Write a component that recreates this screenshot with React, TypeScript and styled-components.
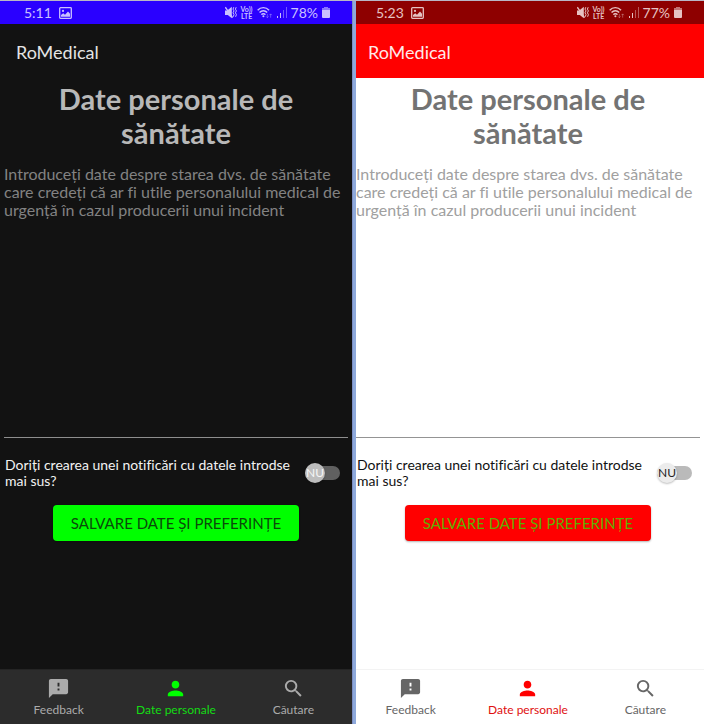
import React, { useId, useState } from "react";
import styled, { createGlobalStyle, ThemeProvider } from "styled-components";
import { MdFeedback, MdPerson, MdSearch } from "react-icons/md";

const GlobalStyle = createGlobalStyle`
  *, *::before, *::after { box-sizing: border-box; }
  body {
    margin: 0;
    background: #ffffff;
    font-family: Lato, "Noto Sans", sans-serif;
    font-variant-ligatures: none;
  }
  button, textarea {
    font-family: inherit;
    font-variant-ligatures: none;
  }
`;

const dark = {
  status: "#2a00ff",
  statusText: "#c9c0ff",
  appBar: "#121212",
  appTitle: "#e4e4e4",
  surface: "#121212",
  heading: "#b8b8b8",
  hint: "#828282",
  line: "#8e8e8e",
  text: "#f2f2f2",
  track: "#606060",
  thumb: "#bdbdbd",
  thumbText: "#f6f6f6",
  button: "#00ff00",
  buttonText: "#0b4a0b",
  nav: "#2c2c2c",
  navEdge: "#242424",
  navItem: "#ababab",
  active: "#00ff00",
  activeText: "#14dc14",
};

const light: typeof dark = {
  status: "#8e0000",
  statusText: "#e6c2c2",
  appBar: "#ff0000",
  appTitle: "#ffe9e9",
  surface: "#ffffff",
  heading: "#737373",
  hint: "#a0a0a0",
  line: "#949494",
  text: "#111111",
  track: "#bababa",
  thumb: "#ececec",
  thumbText: "#222222",
  button: "#ff0000",
  buttonText: "#5fae00",
  nav: "#ffffff",
  navEdge: "#f3f3f3",
  navItem: "#666666",
  active: "#ff0000",
  activeText: "#e01010",
};

type Palette = { theme: typeof dark };

const Page = styled.main`
  display: grid;
  grid-template-columns: 1fr 1fr;
  min-height: 100vh;
  padding-bottom: 2px;
`;

const Screen = styled.section<Palette & { $divided?: boolean }>`
  position: relative;
  display: flex;
  flex-direction: column;
  min-width: 0;
  border-top: 1px solid #b9b6c6;
  background: ${(p) => p.theme.surface};

  &::before {
    content: "";
    display: ${(p) => (p.$divided ? "block" : "none")};
    position: absolute;
    top: 0;
    bottom: 0;
    left: 0;
    width: 4px;
    background: #8ea9db;
    border-left: 1px solid #7d8fc4;
  }
`;

const StatusBar = styled.div<Palette>`
  display: flex;
  align-items: center;
  justify-content: space-between;
  height: 23px;
  padding: 0 22px 0 24px;
  background: ${(p) => p.theme.status};
  color: ${(p) => p.theme.statusText};
  font-size: 14px;
  line-height: 16px;
`;

const StatusGroup = styled.div<{ $gap: number }>`
  display: flex;
  align-items: center;
  gap: ${(p) => p.$gap}px;
`;

const Network = styled.span`
  font-size: 7px;
  font-weight: 700;
  line-height: 7px;
  text-align: center;
`;

const AppBar = styled.header<Palette>`
  display: flex;
  align-items: center;
  height: 54px;
  padding: 2px 16px 0;
  background: ${(p) => p.theme.appBar};
  color: ${(p) => p.theme.appTitle};
  font-size: 18px;
  line-height: 24px;
`;

const Form = styled.form`
  display: flex;
  flex-direction: column;
  flex: 1;
  padding: 4px 4px 0;
`;

const Heading = styled.h1<Palette>`
  align-self: center;
  max-width: 260px;
  margin: 0 0 15px;
  color: ${(p) => p.theme.heading};
  font-size: 29px;
  font-weight: 700;
  line-height: 34px;
  text-align: center;
`;

const Notes = styled.textarea<Palette>`
  width: 100%;
  height: 273px;
  padding: 0;
  border: 0;
  border-bottom: 1px solid ${(p) => p.theme.line};
  outline: 0;
  resize: none;
  background: transparent;
  color: ${(p) => p.theme.text};
  font-size: 16px;
  line-height: 18px;

  &::placeholder {
    color: ${(p) => p.theme.hint};
    opacity: 1;
  }
`;

const Choice = styled.div`
  display: flex;
  align-items: center;
  justify-content: space-between;
  margin-top: 19px;
  padding: 0 8px 0 1px;
`;

const ChoiceLabel = styled.label<Palette>`
  max-width: 296px;
  color: ${(p) => p.theme.text};
  font-size: 14px;
  line-height: 16px;
`;

const Switch = styled.span`
  position: relative;
  flex: none;
  width: 35px;
  height: 20px;
`;

const SwitchInput = styled.input<Palette>`
  appearance: none;
  width: 35px;
  height: 14px;
  margin: 3px 0;
  display: block;
  border-radius: 7px;
  background: ${(p) => p.theme.track};
  cursor: pointer;

  &:checked + span {
    left: 15px;
  }
`;

const Thumb = styled.span<Palette>`
  position: absolute;
  top: 0;
  left: 0;
  display: flex;
  align-items: center;
  justify-content: center;
  width: 20px;
  height: 20px;
  border-radius: 50%;
  background: ${(p) => p.theme.thumb};
  box-shadow: 0 1px 2px rgba(0, 0, 0, 0.25);
  color: ${(p) => p.theme.thumbText};
  font-size: 12px;
  line-height: 20px;
  pointer-events: none;
`;

const SaveButton = styled.button<Palette>`
  align-self: center;
  height: 36px;
  margin-top: 16px;
  padding: 0 16px;
  min-width: 246px;
  border: 0;
  border-radius: 4px;
  background: ${(p) => p.theme.button};
  box-shadow: 0 1px 2px rgba(0, 0, 0, 0.3);
  color: ${(p) => p.theme.buttonText};
  font-size: 15px;
  cursor: pointer;
`;

const BottomNav = styled.nav<Palette>`
  display: grid;
  grid-template-columns: repeat(3, 1fr);
  height: 55px;
  border-top: 1px solid ${(p) => p.theme.navEdge};
  background: ${(p) => p.theme.nav};
`;

const NavLink = styled.a<Palette & { $active?: boolean }>`
  display: flex;
  flex-direction: column;
  align-items: center;
  gap: 2px;
  padding-top: 7px;
  color: ${(p) => (p.$active ? p.theme.activeText : p.theme.navItem)};
  font-size: 12px;
  line-height: 16px;
  text-decoration: none;

  svg {
    color: ${(p) => (p.$active ? p.theme.active : p.theme.navItem)};
  }
`;

const PictureIcon = () => (
  <svg width="13" height="12" viewBox="0 0 13 12" fill="currentColor" aria-hidden="true">
    <rect x=".7" y=".7" width="11.6" height="10.6" rx=".8" fill="none" stroke="currentColor" strokeWidth="1.3" />
    <circle cx="4" cy="3.9" r="1.1" />
    <path d="M2 9.7V8l2.2-1.7 1.8 1.4L9 4.5l2 2.2v3z" />
  </svg>
);

const MuteIcon = () => (
  <svg width="12" height="13" viewBox="0 0 12 13" fill="none" stroke="currentColor" aria-hidden="true">
    <path d="M0 4.4h2.2l4.6-3.6v11.4L2.8 9H0z" fill="currentColor" stroke="none" />
    <path d="M.3 1.2 7.6 11.6" strokeWidth="1.3" />
    <path d="m8.8 1.2-.8 1.9 1 1.8-1 1.9 1 1.8-.8 2.2M11.2 1.2l-.8 1.9 1 1.8-1 1.9 1 1.8-.8 2.2" strokeWidth="1" />
  </svg>
);

const WifiIcon = () => (
  <svg width="16" height="13" viewBox="0 0 17 13" fill="none" stroke="currentColor" aria-hidden="true">
    <path d="M.7 4.2C4 .4 9.5.4 12.8 4.2M2.7 6.6c2.3-2.5 5.8-2.5 8.1 0M4.6 8.8c1.2-1.4 3.2-1.4 4.4 0" strokeWidth="1.5" />
    <circle cx="6.8" cy="10.4" r="1.1" fill="currentColor" stroke="none" />
    <path d="M11 8v4M9.7 10.7 11 12l1.3-1.3M14.5 12V8M13.2 9.3 14.5 8l1.3 1.3" opacity=".45" strokeWidth=".9" />
  </svg>
);

const SignalIcon = () => (
  <svg width="10" height="11" viewBox="0 0 10 11" fill="currentColor" aria-hidden="true">
    <path d="M0 9h1v2H0zM3 6h1v5H3z" />
    <path d="M6 3h1v8H6zM9 0h1v11H9z" opacity=".45" />
  </svg>
);

const BatteryIcon = () => (
  <svg width="8" height="11" viewBox="0 0 8 11" fill="currentColor" aria-hidden="true">
    <path d="M2 0h4v1h2v2H0V1h2z" opacity=".6" />
    <path d="M0 3h8v7q0 1-1 1H1q-1 0-1-1z" />
  </svg>
);

type PhoneProps = {
  palette: typeof dark;
  time: string;
  battery: string;
  divided?: boolean;
};

function Phone({ palette, time, battery, divided }: PhoneProps) {
  const id = useId();
  const [notify, setNotify] = useState(false);

  return (
    <ThemeProvider theme={palette}>
      <Screen $divided={divided}>
        <StatusBar>
          <StatusGroup $gap={7}>
            <span>{time}</span>
            <PictureIcon />
          </StatusGroup>
          <StatusGroup $gap={4}>
            <MuteIcon />
            <Network>
              Vo))
              <br />
              LTE
            </Network>
            <WifiIcon />
            <SignalIcon />
            <span>{battery}</span>
            <BatteryIcon />
          </StatusGroup>
        </StatusBar>
        <AppBar>RoMedical</AppBar>
        <Form onSubmit={(e) => e.preventDefault()}>
          <Heading id={`${id}-title`}>Date personale de sănătate</Heading>
          <Notes
            aria-labelledby={`${id}-title`}
            placeholder="Introduceți date despre starea dvs. de sănătate care credeți că ar fi utile personalului medical de urgență în cazul producerii unui incident"
          />
          <Choice>
            <ChoiceLabel htmlFor={`${id}-notify`}>
              Doriți crearea unei notificări cu datele introdse mai sus?
            </ChoiceLabel>
            <Switch>
              <SwitchInput
                id={`${id}-notify`}
                type="checkbox"
                role="switch"
                checked={notify}
                onChange={(e) => setNotify(e.target.checked)}
              />
              <Thumb>{notify ? "DA" : "NU"}</Thumb>
            </Switch>
          </Choice>
          <SaveButton type="submit">SALVARE DATE ȘI PREFERINȚE</SaveButton>
        </Form>
        <BottomNav>
          <NavLink href="#feedback">
            <MdFeedback size={23} />
            Feedback
          </NavLink>
          <NavLink href="#date" $active aria-current="page">
            <MdPerson size={23} />
            Date personale
          </NavLink>
          <NavLink href="#cautare">
            <MdSearch size={23} />
            Căutare
          </NavLink>
        </BottomNav>
      </Screen>
    </ThemeProvider>
  );
}

export default function App() {
  return (
    <>
      <GlobalStyle />
      <Page>
        <Phone palette={dark} time="5:11" battery="78%" />
        <Phone palette={light} time="5:23" battery="77%" divided />
      </Page>
    </>
  );
}
